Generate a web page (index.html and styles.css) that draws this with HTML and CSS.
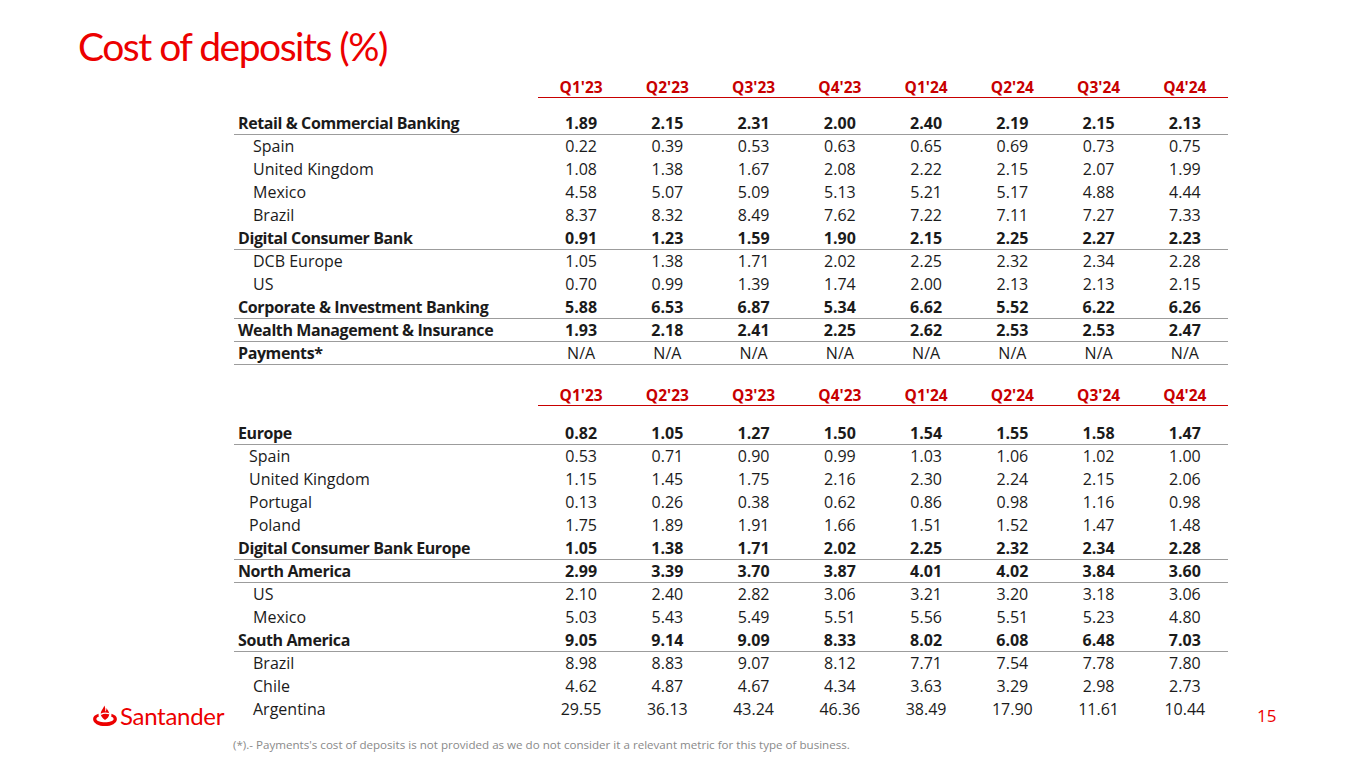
FILE: index.html
```html
<!DOCTYPE html>
<html lang="en">
<head>
<meta charset="utf-8">
<title>Cost of deposits (%)</title>
<link rel="stylesheet" href="styles.css">
</head>
<body>
<div class="slide">
  <h1 class="title">Cost of deposits (%)</h1>

  <div class="tbl">
    <div class="row head"><div></div><div>Q1'23</div><div>Q2'23</div><div>Q3'23</div><div>Q4'23</div><div>Q1'24</div><div>Q2'24</div><div>Q3'24</div><div>Q4'24</div></div>
    <div class="body">
      <div class="row bold"><div class="lbl">Retail &amp; Commercial Banking</div><div>1.89</div><div>2.15</div><div>2.31</div><div>2.00</div><div>2.40</div><div>2.19</div><div>2.15</div><div>2.13</div></div>
      <div class="row"><div class="lbl ind">Spain</div><div>0.22</div><div>0.39</div><div>0.53</div><div>0.63</div><div>0.65</div><div>0.69</div><div>0.73</div><div>0.75</div></div>
      <div class="row"><div class="lbl ind">United Kingdom</div><div>1.08</div><div>1.38</div><div>1.67</div><div>2.08</div><div>2.22</div><div>2.15</div><div>2.07</div><div>1.99</div></div>
      <div class="row"><div class="lbl ind">Mexico</div><div>4.58</div><div>5.07</div><div>5.09</div><div>5.13</div><div>5.21</div><div>5.17</div><div>4.88</div><div>4.44</div></div>
      <div class="row"><div class="lbl ind">Brazil</div><div>8.37</div><div>8.32</div><div>8.49</div><div>7.62</div><div>7.22</div><div>7.11</div><div>7.27</div><div>7.33</div></div>
      <div class="row bold"><div class="lbl">Digital Consumer Bank</div><div>0.91</div><div>1.23</div><div>1.59</div><div>1.90</div><div>2.15</div><div>2.25</div><div>2.27</div><div>2.23</div></div>
      <div class="row"><div class="lbl ind">DCB Europe</div><div>1.05</div><div>1.38</div><div>1.71</div><div>2.02</div><div>2.25</div><div>2.32</div><div>2.34</div><div>2.28</div></div>
      <div class="row"><div class="lbl ind">US</div><div>0.70</div><div>0.99</div><div>1.39</div><div>1.74</div><div>2.00</div><div>2.13</div><div>2.13</div><div>2.15</div></div>
      <div class="row bold"><div class="lbl">Corporate &amp; Investment Banking</div><div>5.88</div><div>6.53</div><div>6.87</div><div>5.34</div><div>6.62</div><div>5.52</div><div>6.22</div><div>6.26</div></div>
      <div class="row bold"><div class="lbl">Wealth Management &amp; Insurance</div><div>1.93</div><div>2.18</div><div>2.41</div><div>2.25</div><div>2.62</div><div>2.53</div><div>2.53</div><div>2.47</div></div>
      <div class="row bold na"><div class="lbl">Payments*</div><div>N/A</div><div>N/A</div><div>N/A</div><div>N/A</div><div>N/A</div><div>N/A</div><div>N/A</div><div>N/A</div></div>
    </div>
  </div>

  <div class="tbl second">
    <div class="row head"><div></div><div>Q1'23</div><div>Q2'23</div><div>Q3'23</div><div>Q4'23</div><div>Q1'24</div><div>Q2'24</div><div>Q3'24</div><div>Q4'24</div></div>
    <div class="body">
      <div class="row bold"><div class="lbl">Europe</div><div>0.82</div><div>1.05</div><div>1.27</div><div>1.50</div><div>1.54</div><div>1.55</div><div>1.58</div><div>1.47</div></div>
      <div class="row"><div class="lbl ind-s">Spain</div><div>0.53</div><div>0.71</div><div>0.90</div><div>0.99</div><div>1.03</div><div>1.06</div><div>1.02</div><div>1.00</div></div>
      <div class="row"><div class="lbl ind-s">United Kingdom</div><div>1.15</div><div>1.45</div><div>1.75</div><div>2.16</div><div>2.30</div><div>2.24</div><div>2.15</div><div>2.06</div></div>
      <div class="row"><div class="lbl ind-s">Portugal</div><div>0.13</div><div>0.26</div><div>0.38</div><div>0.62</div><div>0.86</div><div>0.98</div><div>1.16</div><div>0.98</div></div>
      <div class="row"><div class="lbl ind-s">Poland</div><div>1.75</div><div>1.89</div><div>1.91</div><div>1.66</div><div>1.51</div><div>1.52</div><div>1.47</div><div>1.48</div></div>
      <div class="row bold"><div class="lbl">Digital Consumer Bank Europe</div><div>1.05</div><div>1.38</div><div>1.71</div><div>2.02</div><div>2.25</div><div>2.32</div><div>2.34</div><div>2.28</div></div>
      <div class="row bold"><div class="lbl">North America</div><div>2.99</div><div>3.39</div><div>3.70</div><div>3.87</div><div>4.01</div><div>4.02</div><div>3.84</div><div>3.60</div></div>
      <div class="row"><div class="lbl ind">US</div><div>2.10</div><div>2.40</div><div>2.82</div><div>3.06</div><div>3.21</div><div>3.20</div><div>3.18</div><div>3.06</div></div>
      <div class="row"><div class="lbl ind">Mexico</div><div>5.03</div><div>5.43</div><div>5.49</div><div>5.51</div><div>5.56</div><div>5.51</div><div>5.23</div><div>4.80</div></div>
      <div class="row bold"><div class="lbl">South America</div><div>9.05</div><div>9.14</div><div>9.09</div><div>8.33</div><div>8.02</div><div>6.08</div><div>6.48</div><div>7.03</div></div>
      <div class="row"><div class="lbl ind">Brazil</div><div>8.98</div><div>8.83</div><div>9.07</div><div>8.12</div><div>7.71</div><div>7.54</div><div>7.78</div><div>7.80</div></div>
      <div class="row"><div class="lbl ind">Chile</div><div>4.62</div><div>4.87</div><div>4.67</div><div>4.34</div><div>3.63</div><div>3.29</div><div>2.98</div><div>2.73</div></div>
      <div class="row"><div class="lbl ind">Argentina</div><div>29.55</div><div>36.13</div><div>43.24</div><div>46.36</div><div>38.49</div><div>17.90</div><div>11.61</div><div>10.44</div></div>
    </div>
  </div>

  <p class="note">(*).- Payments's cost of deposits is not provided as we do not consider it a relevant metric for this type of business.</p>

  <div class="brand">
    <svg class="flame" viewBox="0 0 28 24" width="26" height="22" aria-hidden="true">
      <path d="M7 9.5 C3.2 10.6 1 12.6 1 15.2 C1 19.8 7 23 14 23 C21 23 27 19.8 27 15.2 C27 12.6 24.8 10.6 21 9.5 C21.2 10.6 21.1 11.6 20.6 12.6 C22.4 13.3 23.4 14.2 23.4 15.3 C23.4 17.4 19.2 18.9 14 18.9 C8.8 18.9 4.6 17.4 4.6 15.3 C4.6 14.2 5.6 13.3 7.4 12.6 C6.9 11.6 6.8 10.6 7 9.5 Z" fill="#ec0000"/>
      <path d="M13.2 0.5 C12.6 3.6 9.4 5.8 9.4 9.6 C9.4 12.6 11.6 14.8 14 16.4 C16.6 14.8 18.6 12.6 18.6 9.8 C18.6 7.2 16.6 5.6 15.6 3.4 C15.8 5.6 15 6.6 14 7.4 C14.6 5 14.4 2.6 13.2 0.5 Z" fill="#ec0000"/>
      <path d="M9.6 10.2 C11.8 8.8 14.8 8.4 18.4 9.4" stroke="#fff" stroke-width="1.4" fill="none"/>
    </svg>
    <span class="brand-name">Santander</span>
  </div>
  <div class="page-no">15</div>
</div>
</body>
</html>
```

FILE: styles.css
```css
html, body {
  margin: 0;
  padding: 0;
  background: #fff;
}

.slide {
  position: relative;
  width: 1365px;
  height: 768px;
  overflow: hidden;
  font-family: "Open Sans", "Noto Sans", sans-serif;
  color: #1b1b1b;
}

.title {
  margin: 0;
  padding: 22px 0 0 78px;
  height: 55px;
  font-family: "Lato", sans-serif;
  font-weight: 400;
  font-size: 39px;
  line-height: 48px;
  letter-spacing: -1.5px;
  color: #ec0000;
}

.tbl {
  margin-left: 234px;
  width: 994px;
}

.second {
  margin-top: 20px;
}

.second .body {
  margin-top: 17px;
}

.row {
  display: grid;
  grid-template-columns: 304px repeat(8, 1fr);
  height: 23px;
  line-height: 23px;
  font-size: 16px;
  box-sizing: border-box;
}

.row > div {
  text-align: center;
  white-space: nowrap;
}

.row > .lbl {
  text-align: left;
  padding-left: 4px;
}

.lbl.ind {
  padding-left: 19px;
}

.lbl.ind-s {
  padding-left: 15px;
}

.head {
  height: 20px;
  line-height: 20px;
  font-size: 15.5px;
  font-weight: 700;
  color: #c80000;
}

.head > div:not(:first-child) {
  border-bottom: 1.5px solid #c80000;
}

.body {
  margin-top: 15px;
}

.bold {
  font-weight: 700;
  border-bottom: 1px solid #9c9c9c;
  line-height: 22px;
}

.bold > .lbl {
  letter-spacing: -0.4px;
}

.na > div:not(.lbl) {
  font-weight: 400;
}

.note {
  margin: 16px 0 0 233px;
  font-size: 11.6px;
  line-height: 16px;
  color: #8a8a8a;
}

.brand {
  position: absolute;
  left: 92px;
  top: 704px;
  display: flex;
  align-items: center;
  gap: 2px;
}

.brand-name {
  font-family: "Lato", sans-serif;
  font-size: 24px;
  line-height: 24px;
  color: #ec0000;
  letter-spacing: -0.3px;
}

.page-no {
  position: absolute;
  left: 1257px;
  top: 705px;
  font-size: 17px;
  line-height: 22px;
  color: #ec0000;
}
```
